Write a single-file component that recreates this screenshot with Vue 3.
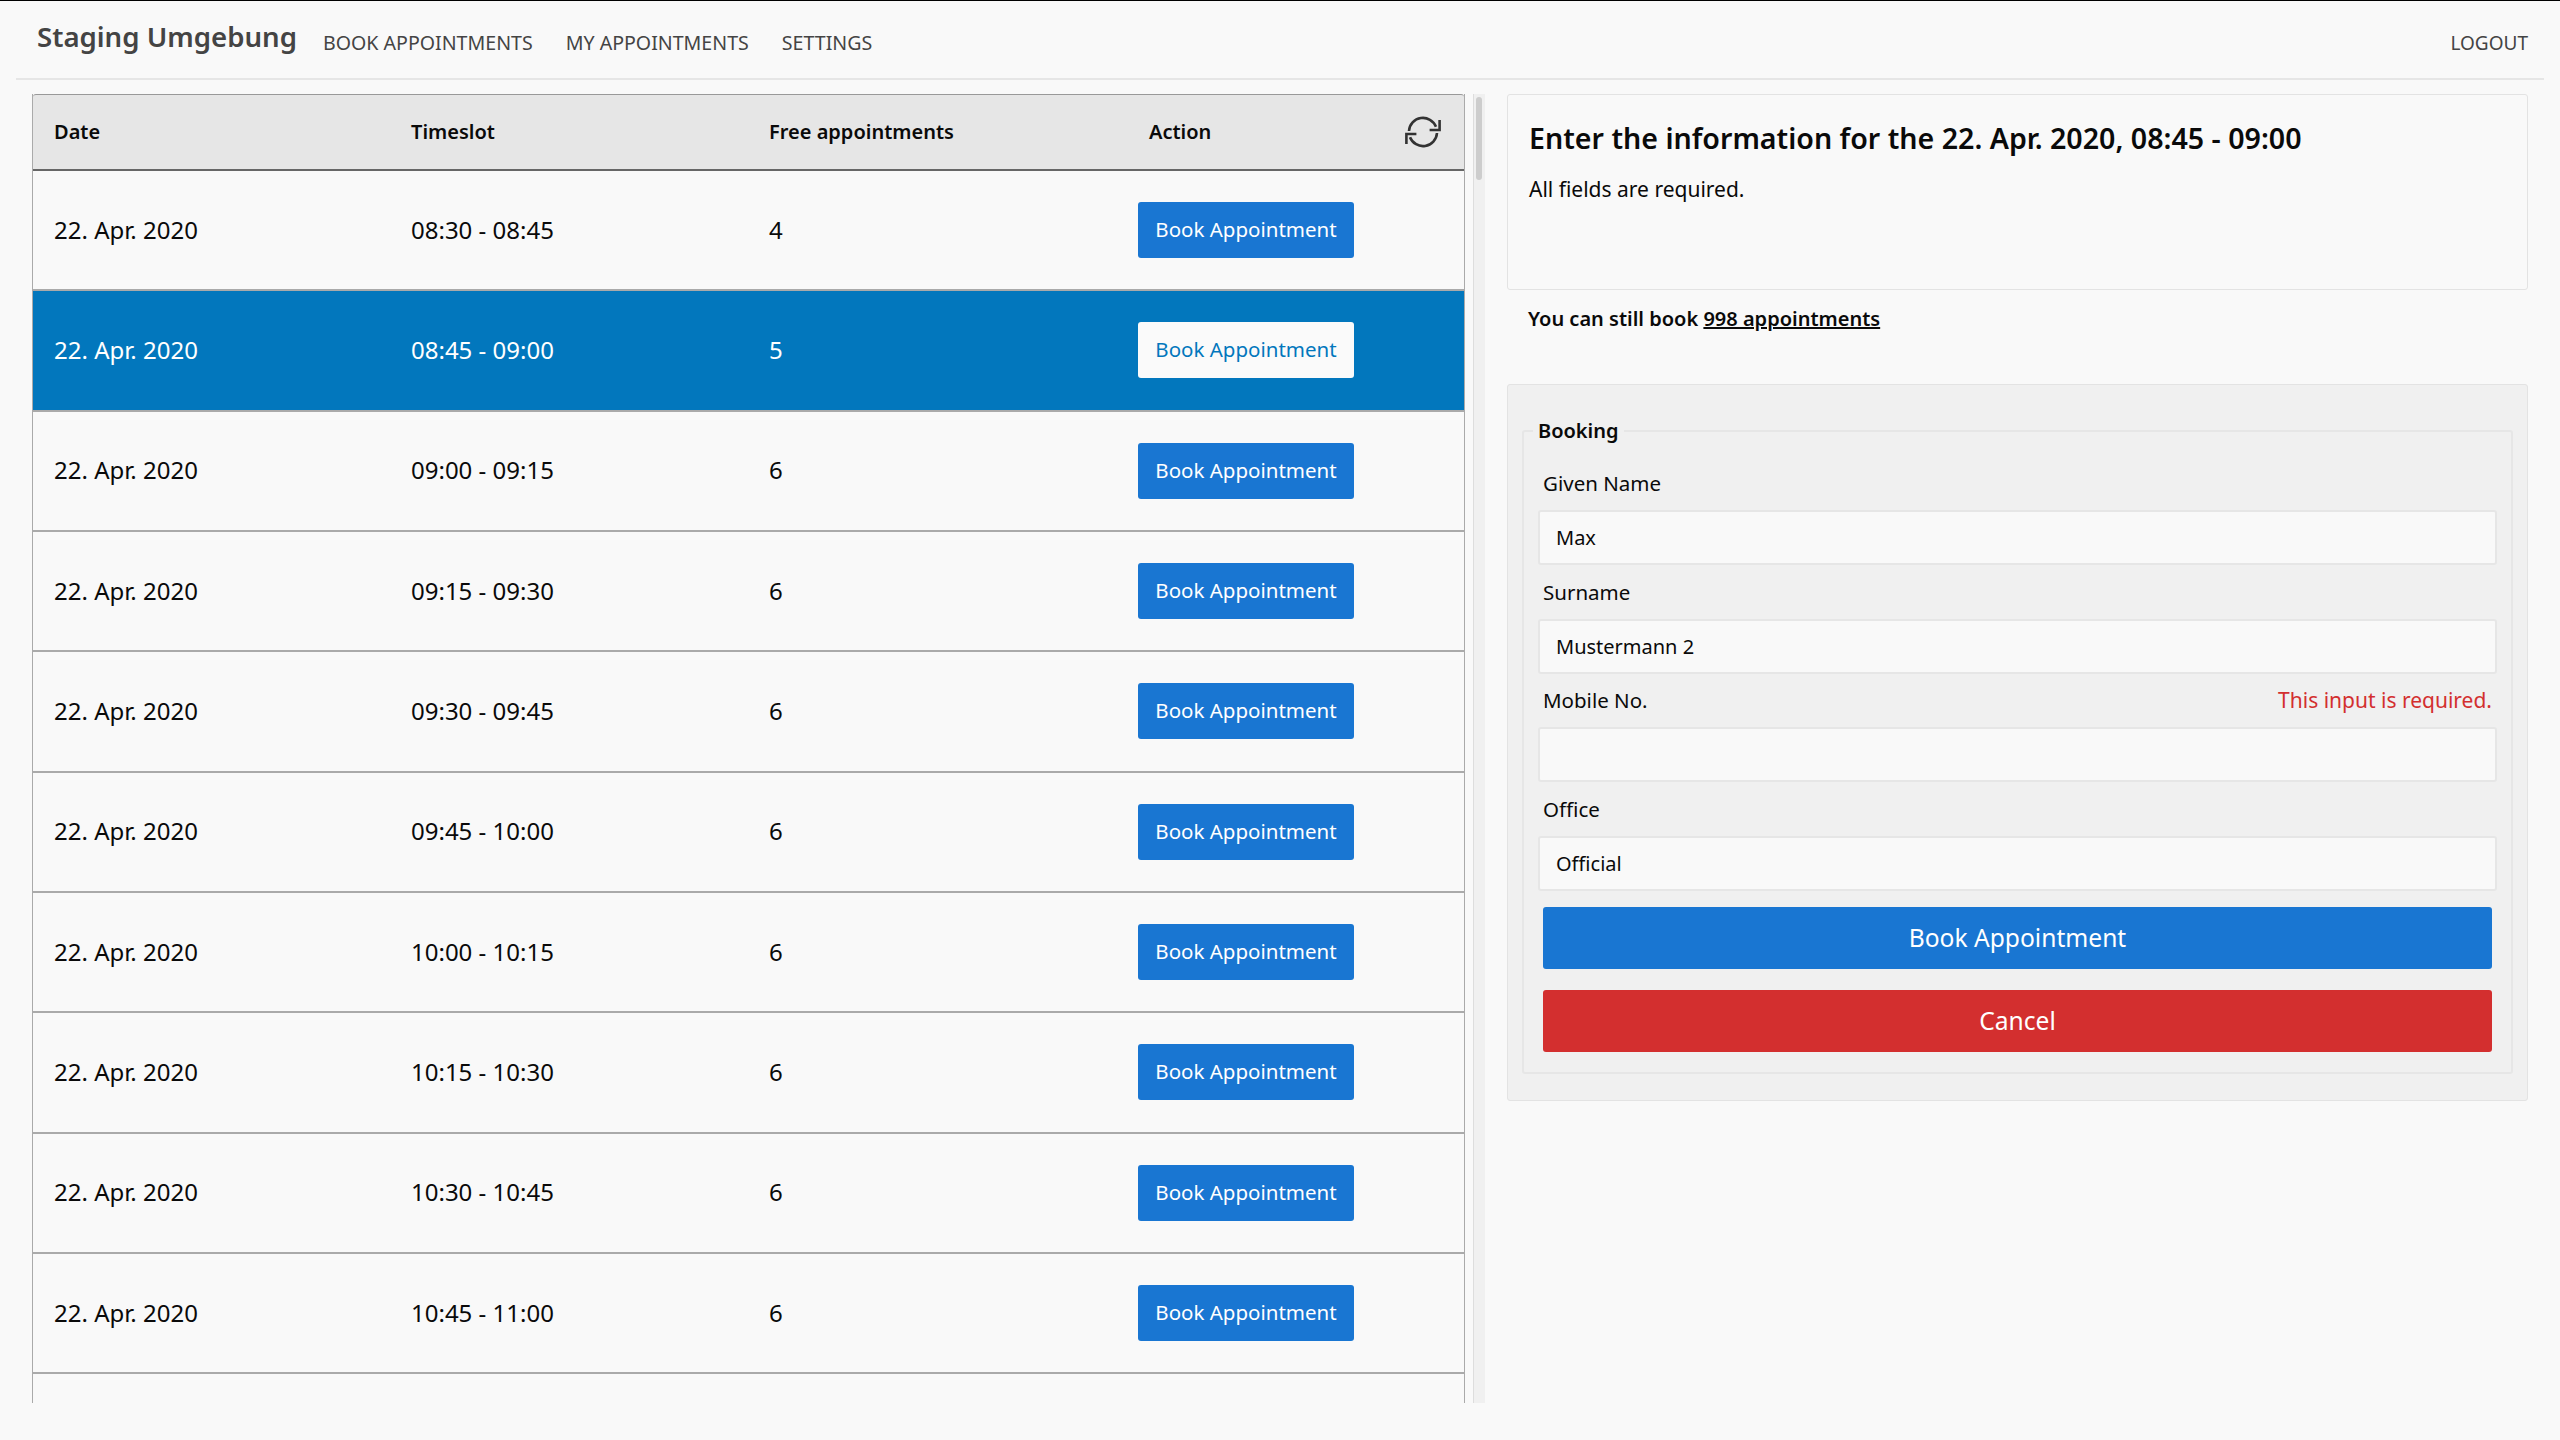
<script setup>
const times = ['08:30 - 08:45', '08:45 - 09:00', '09:00 - 09:15', '09:15 - 09:30', '09:30 - 09:45', '09:45 - 10:00', '10:00 - 10:15', '10:15 - 10:30', '10:30 - 10:45', '10:45 - 11:00']
const free = [4, 5, 6, 6, 6, 6, 6, 6, 6, 6]
const slots = times.map((time, i) => ({ date: '22. Apr. 2020', time, free: free[i], active: i === 1 }))
const fields = [
  { label: 'Given Name', value: 'Max' },
  { label: 'Surname', value: 'Mustermann 2' },
  { label: 'Mobile No.', value: '', error: 'This input is required.' },
  { label: 'Office', value: 'Official' },
]
</script>

<template>
  <div class="page">
    <nav class="topbar">
      <span class="brand">Staging Umgebung</span>
      <a class="nav-link">BOOK APPOINTMENTS</a>
      <a class="nav-link">MY APPOINTMENTS</a>
      <a class="nav-link">SETTINGS</a>
      <a class="nav-link logout">LOGOUT</a>
    </nav>
    <main class="content">
      <section class="list-col">
        <div class="table">
          <div class="row head">
            <div class="cell">Date</div>
            <div class="cell">Timeslot</div>
            <div class="cell">Free appointments</div>
            <div class="cell action-head">
              <span>Action</span>
              <svg class="refresh" width="40" height="40" viewBox="-20 -20 40 40" fill="none" stroke="#333" stroke-width="2.6">
                <path d="M-14 -1 A14 14 0 0 1 13 -5.2" />
                <path d="M16.6 -12 V-2 H6.6" />
                <path d="M14 1 A14 14 0 0 1 -13 5.2" />
                <path d="M-16.6 12 V2 H-6.6" />
              </svg>
            </div>
          </div>
          <div v-for="slot in slots" :key="slot.time" :class="['row', 'slot', { active: slot.active }]">
            <div class="cell">{{ slot.date }}</div>
            <div class="cell">{{ slot.time }}</div>
            <div class="cell">{{ slot.free }}</div>
            <div class="cell action-cell"><button class="book-btn">Book Appointment</button></div>
          </div>
        </div>
        <div class="scroll-track"><div class="scroll-thumb"></div></div>
      </section>
      <section class="form-col">
        <div class="info-box">
          <h2>Enter the information for the 22. Apr. 2020, 08:45 - 09:00</h2>
          <p>All fields are required.</p>
        </div>
        <p class="remaining">You can still book <u>998 appointments</u></p>
        <div class="panel">
          <fieldset>
            <legend>Booking</legend>
            <div v-for="field in fields" :key="field.label" class="field">
              <div class="field-label">
                <label>{{ field.label }}</label>
                <span v-if="field.error" class="error">{{ field.error }}</span>
              </div>
              <input type="text" :value="field.value" />
            </div>
            <button class="wide-btn primary">Book Appointment</button>
            <button class="wide-btn danger">Cancel</button>
          </fieldset>
        </div>
      </section>
    </main>
  </div>
</template>

<style>
body {
  background: #f9f9f9;
}
</style>

<style scoped>
.page {
  height: 1440px;
  box-sizing: border-box;
  border-top: 1px solid #000;
  background: #f9f9f9;
  color: #0a0a0a;
  font-family: "Noto Sans", "Open Sans", sans-serif;
  font-size: 24px;
  overflow: hidden;
}

.topbar {
  display: flex;
  align-items: center;
  height: 77px;
  margin: 0 16px;
  padding: 0 16px 0 21px;
  border-bottom: 2px solid #e6e6e6;
  box-sizing: content-box;
  color: #444;
}

.brand {
  font-size: 27.6px;
  font-weight: 600;
  margin-right: 26px;
  margin-top: -7px;
}

.nav-link {
  font-size: 19.6px;
  margin-right: 33px;
  margin-top: 6px;
}

.logout {
  margin-left: auto;
  margin-right: 0;
  font-size: 19px;
}

.content {
  display: flex;
  padding: 14px 32px 0;
}

.list-col {
  display: flex;
  width: 1453px;
  height: 1309px;
  flex: none;
}

.table {
  width: 1431px;
  flex: none;
  overflow: hidden;
  border-left: 1px solid #aaa;
  border-right: 1px solid #aaa;
  box-sizing: content-box;
}

.row {
  display: grid;
  grid-template-columns: 358px 358px 358px 1fr;
  align-items: center;
}

.head {
  height: 74px;
  background: #e6e6e6;
  border-top: 1px solid #999;
  border-bottom: 2px solid #666;
  font-size: 20px;
  font-weight: 600;
  border-radius: 3px 3px 0 0;
}

.slot {
  height: 118.33px;
  border-bottom: 2px solid #aaa;
}

.slot.active {
  background: #0277bd;
  color: #fff;
}

.cell {
  padding: 0 0 2px 20px;
}

.cell:first-child {
  padding-left: 21px;
}

.action-head {
  display: flex;
  align-items: center;
  justify-content: space-between;
  padding: 0 21px 0 42px;
}

.action-head span {
  padding-bottom: 2px;
}

.action-cell {
  padding: 0 0 0 31px;
}

.book-btn {
  width: 216px;
  height: 56px;
  border: none;
  border-radius: 3px;
  background: #1976d2;
  color: #fff;
  font-family: inherit;
  font-size: 20.5px;
  padding: 0 0 2px;
}

.active .book-btn {
  background: #fafafa;
  color: #0277bd;
}

.scroll-track {
  width: 12px;
  margin-left: 8px;
  flex: none;
  padding: 3px 2px;
  box-sizing: border-box;
  background: #f0f0f0;
  border-left: 1px solid #ddd;
}

.scroll-thumb {
  width: 6px;
  height: 83px;
  border-radius: 3px;
  background: #cdcdcd;
}

.form-col {
  width: 1021px;
  margin-left: 22px;
  flex: none;
}

.info-box {
  height: 196px;
  box-sizing: border-box;
  border: 1px solid #e3e3e3;
  border-radius: 3px;
  padding: 25px 21px;
}

.info-box h2 {
  margin: 0;
  font-size: 28.6px;
  font-weight: 600;
  line-height: 36px;
}

.info-box p {
  margin: 18px 0 0;
  font-size: 21px;
  line-height: 30px;
}

.remaining {
  margin: 14px 0 0 21px;
  font-size: 20px;
  font-weight: 600;
  line-height: 30px;
  height: 80px;
}

.panel {
  height: 717px;
  box-sizing: border-box;
  padding: 31px 14px 0;
  background: #f0f0f0;
  border: 1px solid #e3e3e3;
  border-radius: 3px;
}

fieldset {
  margin: 0;
  height: 658px;
  box-sizing: border-box;
  padding: 10px 14px 0;
  border: 2px solid #e6e6e6;
  border-radius: 3px;
}

legend {
  margin-left: -5px;
  padding: 0 5px;
  font-size: 20px;
  font-weight: 600;
  line-height: 30px;
}

.field {
  height: 108.67px;
}

.field-label {
  display: flex;
  justify-content: space-between;
  align-items: center;
  height: 54px;
  padding: 0 5px;
  font-size: 20.5px;
}

.error {
  color: #d32f2f;
  font-size: 21px;
}

input {
  display: block;
  width: 100%;
  height: 55px;
  box-sizing: border-box;
  padding: 0 16px;
  border: 2px solid #e6e6e6;
  border-radius: 3px;
  background: #f9f9f9;
  color: #0a0a0a;
  font-family: inherit;
  font-size: 20px;
  outline: none;
}

.wide-btn {
  display: block;
  width: calc(100% - 10px);
  height: 62px;
  margin: 16px 5px 0;
  border: none;
  border-radius: 3px;
  color: #fff;
  font-family: inherit;
  font-size: 24.6px;
}

.primary {
  background: #1976d2;
}

.danger {
  background: #d32f2f;
  margin-top: 21px;
}
</style>
